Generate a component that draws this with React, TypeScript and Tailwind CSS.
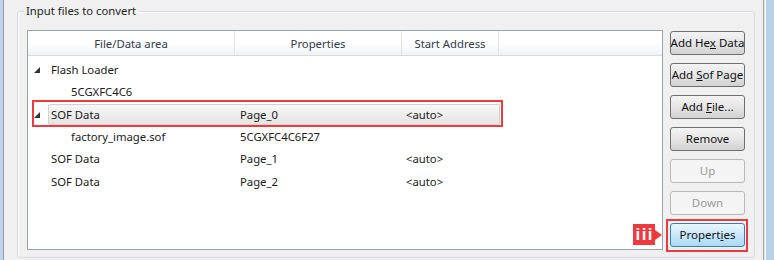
import type { ReactNode } from "react";

const font = { fontFamily: '"Noto Sans", "Open Sans", Arial, sans-serif' };

function Expander() {
  return (
    <svg width="6" height="6" viewBox="0 0 6 6" className="block">
      <polygon points="6,0 6,6 0,6" fill="#333" />
    </svg>
  );
}

type Row = {
  name: string;
  props?: string;
  addr?: string;
  child?: boolean;
  expanded?: boolean;
  selected?: boolean;
};

const rows: Row[] = [
  { name: "Flash Loader", expanded: true },
  { name: "5CGXFC4C6", child: true },
  { name: "SOF Data", props: "Page_0", addr: "<auto>", expanded: true, selected: true },
  { name: "factory_image.sof", props: "5CGXFC4C6F27", child: true },
  { name: "SOF Data", props: "Page_1", addr: "<auto>" },
  { name: "SOF Data", props: "Page_2", addr: "<auto>" },
];

function Button({
  children,
  disabled,
  active,
}: {
  children: ReactNode;
  disabled?: boolean;
  active?: boolean;
}) {
  let cls =
    "border-[#707070] bg-gradient-to-b from-[#f3f3f3] via-[#e6e6e6] to-[#d2d2d2] text-[#111]";
  if (disabled) cls = "border-[#b8babc] bg-[#f4f4f4] text-[#9a9a9a]";
  if (active)
    cls =
      "border-[#3c7fb1] bg-gradient-to-b from-[#eaf6fd] via-[#c9e8fb] to-[#a9daf6] text-[#111]";
  return (
    <div
      className={`h-[24px] w-[75px] rounded-[3px] border flex items-center justify-center text-[11.5px] leading-none ${cls}`}
    >
      <span className="whitespace-nowrap">{children}</span>
    </div>
  );
}

export default function App() {
  return (
    <div className="w-[774px] h-[260px] flex bg-[#f0f0f0] overflow-hidden" style={font}>
      <div className="w-[3px] bg-[#bfd3eb]" />
      <div className="w-[1px] bg-[#8aa0ba]" />

      <div className="flex-1 pl-[13px] pt-[11px]">
        <div className="relative w-[738px] h-[247px] border border-[#d5dbe0] rounded-[3px] shadow-[inset_1px_1px_0_#fff] flex pl-[9px] pt-[18px]">
          <span className="absolute left-[6px] -top-[9px] px-[2px] bg-[#f0f0f0] text-[11.3px] leading-[16px] text-[#1e1e1e]">
            Input files to convert
          </span>

          {/* list view */}
          <div className="w-[636px] h-[220px] border border-[#9da3aa] bg-white">
            <div className="flex h-[25px] bg-gradient-to-b from-white via-white to-[#f1f2f4] border-b border-[#d8dadd] text-[11.3px] text-[#323a48]">
              <div className="w-[207px] flex items-center justify-center pt-[3px] border-r border-[#e2e4e7]">
                File/Data area
              </div>
              <div className="w-[167px] flex items-center justify-center pt-[3px] border-r border-[#e2e4e7]">
                Properties
              </div>
              <div className="w-[97px] flex items-center justify-center pt-[3px] border-r border-[#e2e4e7]">
                Start Address
              </div>
            </div>

            <div className="pt-[3px]">
              {rows.map((r, i) => (
                <div key={i} className="relative flex items-center h-[22.4px] text-[11.3px] text-[#1a1a1a]">
                  <div className="w-[20px] flex justify-end pr-[8px]">
                    {r.expanded && <Expander />}
                  </div>
                  <div
                    className={`flex items-center w-[452px] h-[21px] rounded-[2px] border ${
                      r.selected
                        ? "border-[#d2d2d2] bg-gradient-to-b from-[#f7f7f7] to-[#e4e4e4]"
                        : "border-transparent"
                    }`}
                  >
                    <div className={`w-[186px] ${r.child ? "pl-[22px]" : "pl-[2px]"}`}>{r.name}</div>
                    <div className="w-[167px] pl-[5px]">{r.props}</div>
                    <div className="w-[97px] pl-[4px]">{r.addr}</div>
                  </div>
                  {r.selected && (
                    <span className="absolute left-[4px] -top-[4px] w-[471px] h-[27px] border-2 border-[#ec3a3f]" />
                  )}
                </div>
              ))}
            </div>
          </div>

          {/* buttons */}
          <div className="ml-[7px] pt-[1px] flex flex-col gap-[8px]">
            <Button>
              Add He<span className="underline">x</span> Data
            </Button>
            <Button>
              Add <span className="underline">S</span>of Page
            </Button>
            <Button>
              Add <span className="underline">F</span>ile...
            </Button>
            <Button>Remove</Button>
            <Button disabled>Up</Button>
            <Button disabled>Down</Button>
            <div className="relative">
              <Button active>
                Propert<span className="underline">i</span>es
              </Button>
              <span className="absolute -left-[4px] -right-[3px] -top-[4px] -bottom-[5px] border-2 border-[#ec3a3f]" />
              <div className="absolute -left-[37px] top-[1px] flex items-center">
                <div
                  className="w-[22px] h-[21px] bg-[#ee3a3f] flex items-center justify-center text-white font-bold text-[17px] leading-none tracking-[1.5px] pl-[1.5px]"
                  style={{ fontFamily: '"Liberation Sans", Arial, sans-serif' }}
                >
                  iii
                </div>
                <div className="w-0 h-0 border-y-[5px] border-y-transparent border-l-[7px] border-l-[#ee3a3f]" />
              </div>
            </div>
          </div>
        </div>
      </div>

      <div className="w-[1px] bg-[#a3a3a3]" />
      <div className="w-[1px] bg-[#e4e4e4]" />
      <div className="w-[1px] bg-[#ffffff]" />
      <div className="w-[8px] bg-[#bad1ea]" />
    </div>
  );
}
